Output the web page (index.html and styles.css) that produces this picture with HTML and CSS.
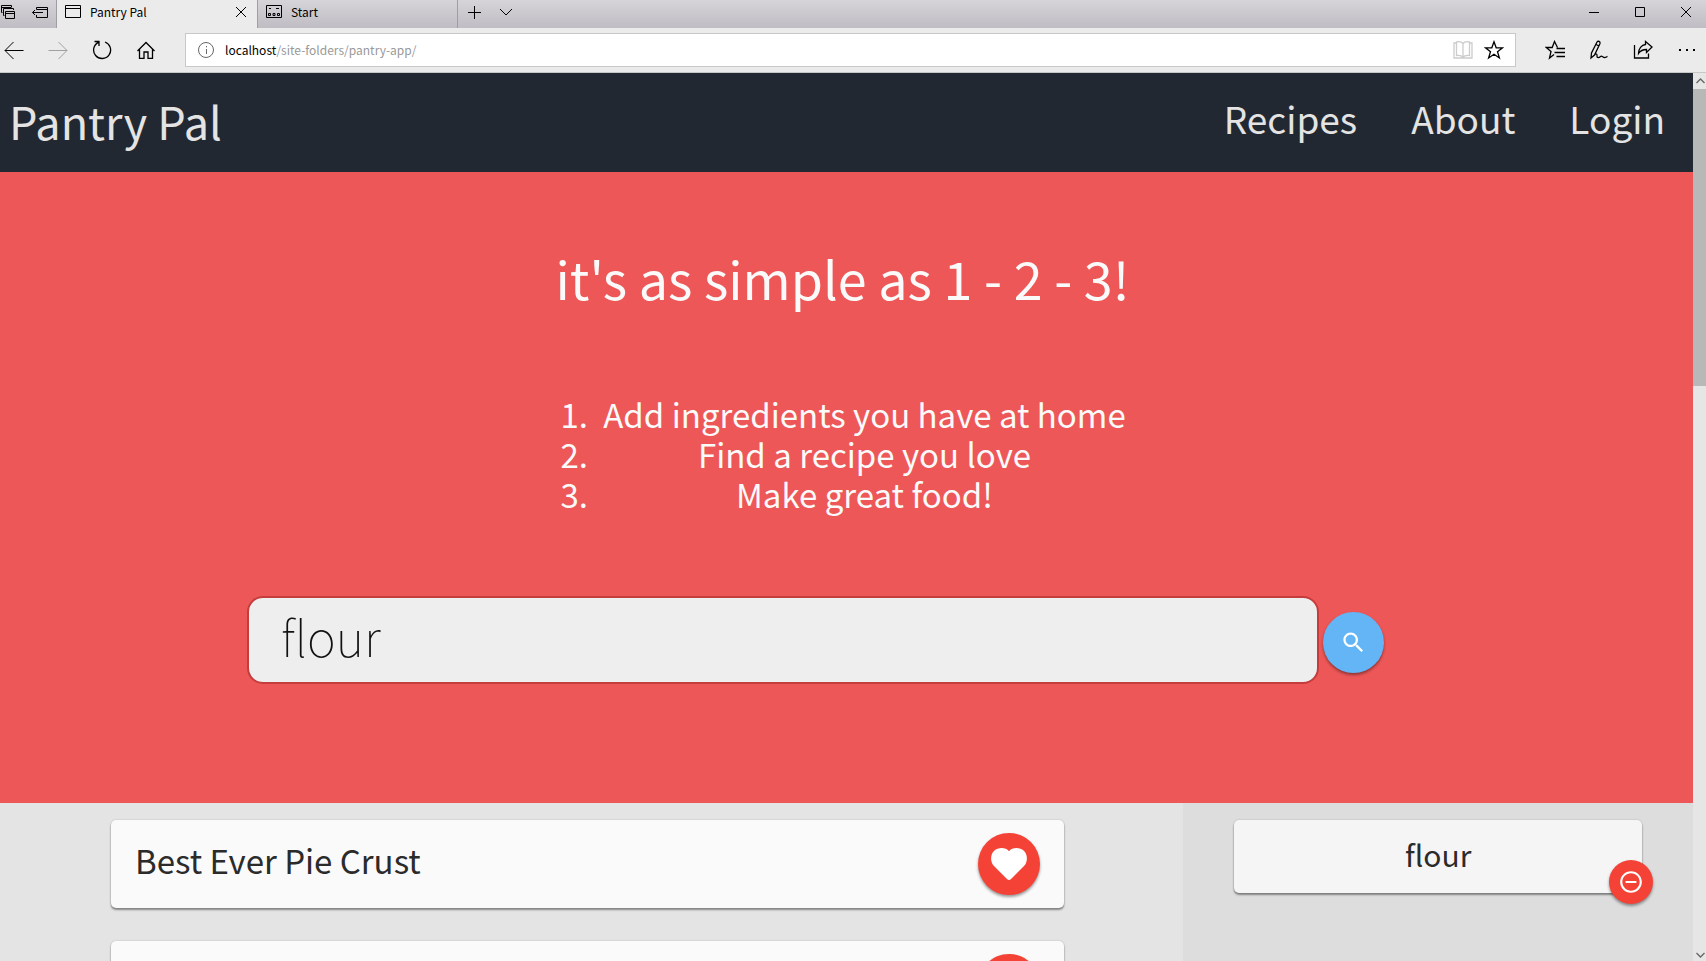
FILE: index.html
```html
<!DOCTYPE html>
<html lang="en">
<head>
<meta charset="utf-8">
<title>Pantry Pal</title>
<link rel="stylesheet" href="styles.css">
</head>
<body>
<header class="browser">
  <div class="tabbar">
    <div class="tab-tools">
      <button class="chrome-btn" aria-label="Tabs set aside"><svg width="16" height="16" viewBox="0 0 16 16"><path d="M2.500 8.500H1.500V1.500H11.500V3M1.500 3.500H11.500M4.500 11.500H3.500V4.500H13.500V6M5.500 7.500H14.500V14.500H5.500ZM5.500 9.500H14.500"/></svg></button>
      <button class="chrome-btn" aria-label="Set tabs aside"><svg width="17" height="16" viewBox="0 0 17 16"><path d="M5.500 5.500V3.500H16.500V13.500H5.500V11M5.500 5.500H16.500M1.500 8.500H12M4 6L1.500 8.500L4 11"/></svg></button>
    </div>
    <div class="tab tab-active">
      <svg width="16" height="16" viewBox="0 0 16 16"><path d="M.5 1.500H15.500V13.500H.5ZM.5 4.500H15.500"/></svg>
      <span class="tab-name">Pantry Pal</span>
      <button class="chrome-btn tab-close" aria-label="Close tab"><svg width="12" height="12" viewBox="0 0 12 12"><path d="M1 1L11 11M11 1L1 11"/></svg></button>
    </div>
    <div class="tab">
      <svg width="16" height="16" viewBox="0 0 16 16"><path d="M.5 1.500H15.500V13.500H.5ZM3 4.500H5M10 4.500H13M2.500 9.500H4.500V11.500H2.500ZM7 9.500H9V11.500H7ZM11.500 9.500H13.500V11.500H11.500Z"/></svg>
      <span class="tab-name">Start</span>
    </div>
    <div class="tab-actions">
      <button class="chrome-btn" aria-label="New tab"><svg width="14" height="14" viewBox="0 0 14 14"><path d="M7.500 1V14M1 7.500H14"/></svg></button>
      <button class="chrome-btn" aria-label="Tab previews"><svg width="14" height="14" viewBox="0 0 14 14"><path d="M1 4L7 10L13 4"/></svg></button>
    </div>
    <div class="window-controls">
      <button class="chrome-btn" aria-label="Minimize"><svg width="12" height="12" viewBox="0 0 12 12"><path d="M1 6.500H11"/></svg></button>
      <button class="chrome-btn" aria-label="Maximize"><svg width="12" height="12" viewBox="0 0 12 12"><path d="M1.500 1.500H10.500V10.500H1.500Z"/></svg></button>
      <button class="chrome-btn" aria-label="Close"><svg width="12" height="12" viewBox="0 0 12 12"><path d="M1 1L11 11M11 1L1 11"/></svg></button>
    </div>
  </div>
  <div class="toolbar">
    <div class="nav-buttons">
      <button class="chrome-btn" aria-label="Back"><svg width="20" height="20" viewBox="0 0 20 20"><path d="M19.500 10.500H1M9.500 2L1 10.500L9.500 19"/></svg></button>
      <button class="chrome-btn dim" aria-label="Forward"><svg width="20" height="20" viewBox="0 0 20 20"><path d="M.5 10.500H19M10.500 2L19 10.500L10.500 19"/></svg></button>
      <button class="chrome-btn" aria-label="Refresh"><svg width="20" height="20" viewBox="0 0 20 20"><path class="medium" d="M6.500 2.300A8.500 8.500 0 1 0 13 2M2.500 1.500H7V6"/></svg></button>
      <button class="chrome-btn" aria-label="Home"><svg width="20" height="20" viewBox="0 0 20 20"><path class="medium" d="M1.500 11L10 2.500L18.500 11M3.500 9.500V18.300H8V12H12V18.300H16.500V9.500"/></svg></button>
    </div>
    <div class="address">
      <svg class="grey" width="16" height="16" viewBox="0 0 16 16"><circle cx="8" cy="8" r="7.500"/><path d="M8.500 7V12M8.500 4V5.300"/></svg>
      <span class="url"><span class="host">localhost</span>/site-folders/pantry-app/</span>
      <button class="chrome-btn faint" aria-label="Reading view"><svg width="20" height="20" viewBox="0 0 20 20"><path class="medium" d="M3 3H1V18H19V3H17M10 3.500C8.500 1.500 5.500 1.500 3.500 2V15.500C6 15 8.500 15.500 10 17C11.500 15.500 14 15 16.500 15.500V2C14.500 1.500 11.500 1.500 10 3.500V17"/></svg></button>
      <button class="chrome-btn" aria-label="Add to favorites"><svg width="20" height="20" viewBox="0 0 20 20"><path class="medium" d="M10 1.800L12.200 7.800H18.600L13.500 11.700L15.400 18L10 14.300L4.600 18L6.500 11.700L1.400 7.800H7.800Z"/></svg></button>
    </div>
    <div class="hub">
      <button class="chrome-btn" aria-label="Hub"><svg width="20" height="20" viewBox="0 0 20 20"><path class="medium" d="M12.500 7.500L9.500 1.500L7.200 7.500H1.200L6 11.500L4.500 18L9 14.500M11.500 8.500H20M9.500 12.500H20M11.500 16.500H20"/></svg></button>
      <button class="chrome-btn" aria-label="Add notes"><svg width="20" height="20" viewBox="0 0 20 20"><path class="medium" d="M2 18L2.500 13L8 2C9 .5 11.500 1.500 11 3.500L5.500 15ZM7 4.500L10 6M5.500 15C7 13 8.500 14 8 16.500C8 18 10 18 11.500 16.500C13 15 14 18 16 17.500C17.500 17.500 18 16.500 18.500 16.500"/></svg></button>
      <button class="chrome-btn" aria-label="Share"><svg width="20" height="20" viewBox="0 0 20 20"><path class="medium" d="M1.500 5V18H15.500V13.500M12.500 1.500L19 7L13.500 12.500V9.500C9.500 9.500 7.500 10.500 5.500 13.500C5.500 8.500 8.500 5 12.500 4.500Z"/></svg></button>
      <button class="chrome-btn" aria-label="More"><svg width="20" height="20" viewBox="0 0 20 20"><path class="solid" d="M2 9h2v2H2zM9 9h2v2H9zM16 9h2v2h-2z"/></svg></button>
    </div>
  </div>
</header>
<div class="viewport">
  <div class="page">
    <nav class="navbar">
      <a class="brand" href="#">Pantry Pal</a>
      <div class="nav-links">
        <a href="#recipes">Recipes</a>
        <a href="#about">About</a>
        <a href="#login">Login</a>
      </div>
    </nav>
    <section class="hero">
      <h1 class="hero-title">it's as simple as 1 - 2 - 3!</h1>
      <ol class="steps">
        <li>Add ingredients you have at home</li>
        <li>Find a recipe you love</li>
        <li>Make great food!</li>
      </ol>
      <form class="search">
        <input class="search-input" type="text" value="flour" aria-label="Ingredient">
        <button class="round search-btn" type="button" aria-label="Search"><svg width="27" height="27" viewBox="0 0 24 24"><path class="solid" d="M15.500 14h-.79l-.28-.27C15.410 12.590 16 11.110 16 9.500 16 5.910 13.090 3 9.500 3S3 5.910 3 9.500 5.910 16 9.500 16c1.610 0 3.090-.59 4.230-1.570l.27.28v.79l5 4.990L20.490 19l-4.990-5zm-6 0C7.010 14 5 11.990 5 9.500S7.010 5 9.500 5 14 7.010 14 9.500 11.990 14 9.500 14z"/></svg></button>
      </form>
    </section>
    <main class="content">
      <section class="recipes" id="recipes">
        <article class="card recipe">
          <h2 class="recipe-name">Best Ever Pie Crust</h2>
          <button class="round like" aria-label="Save Best Ever Pie Crust"><svg width="36" height="32" viewBox="0 0 36 32"><path class="solid" d="M18 3.200C15 -.5 7.500 -1.200 3.200 2.800C-.8 6.500 -1 14 3 18L16 31C17.200 32.200 18.800 32.200 20 31L33 18C37 14 36.800 6.500 32.800 2.800C28.500 -1.200 21 -.5 18 3.200Z"/></svg></button>
        </article>
        <article class="card recipe">
          <button class="round like" aria-label="Save recipe"><svg width="36" height="32" viewBox="0 0 36 32"><path class="solid" d="M18 3.200C15 -.5 7.500 -1.200 3.200 2.800C-.8 6.500 -1 14 3 18L16 31C17.200 32.200 18.800 32.200 20 31L33 18C37 14 36.800 6.500 32.800 2.800C28.500 -1.200 21 -.5 18 3.200Z"/></svg></button>
        </article>
      </section>
      <aside class="pantry">
        <div class="card ingredient">
          <span>flour</span>
          <button class="round remove" aria-label="Remove flour"><svg width="26" height="26" viewBox="0 0 24 24"><path class="solid" d="M7 11v2h10v-2H7zm5-9C6.480 2 2 6.480 2 12s4.480 10 10 10 10-4.480 10-10S17.520 2 12 2zm0 18c-4.410 0-8-3.590-8-8s3.590-8 8-8 8 3.590 8 8-3.590 8-8 8z"/></svg></button>
        </div>
      </aside>
    </main>
  </div>
  <div class="scrollbar" aria-hidden="true">
    <svg class="grey" width="13" height="16" viewBox="0 0 13 16"><path class="medium" d="M3.500 10L7.500 6L11.500 10"/></svg>
    <div class="track"><div class="thumb"></div></div>
    <svg class="grey" width="13" height="12" viewBox="0 0 13 12"><path class="medium" d="M3.500 4L7.500 8L11.500 4"/></svg>
  </div>
</div>
</body>
</html>
```

FILE: styles.css
```css
* {
  box-sizing: border-box;
}

body {
  margin: 0;
  height: 100vh;
  display: flex;
  flex-direction: column;
  overflow: hidden;
  font-family: "Noto Sans CJK JP", "Noto Sans", sans-serif;
}

button {
  border: 0;
  padding: 0;
  background: none;
  font: inherit;
}

a {
  color: inherit;
  text-decoration: none;
}

svg {
  display: block;
  flex: none;
  fill: none;
  stroke: currentColor;
}

.medium {
  stroke-width: 1.3;
}

.solid {
  fill: currentColor;
  stroke: none;
}

.grey {
  color: #666;
}

.chrome-btn {
  display: flex;
  color: #000;
}

.dim {
  color: #a0a0a0;
}

.faint {
  color: #ccc;
}

/* Browser frame */
.browser {
  flex: none;
  font-size: 12px;
  line-height: 16px;
  color: #000;
}

.tabbar {
  display: flex;
  height: 28px;
  padding-right: 14px;
  background: linear-gradient(#d6d4d8, #bfbdc3);
}

.tab-tools,
.tab-actions,
.window-controls {
  display: flex;
  align-items: center;
  padding-bottom: 4px;
}

.tab-tools {
  gap: 15px;
  width: 56px;
}

.tab {
  display: flex;
  align-items: center;
  gap: 9px;
  width: 200px;
  padding: 0 10px 4px 8px;
  border-right: 1px solid #a09ea2;
}

.tab-active {
  width: 202px;
  border-left: 1px solid #a09ea2;
  background: #ebebeb;
}

.tab-name {
  flex: 1;
}

.tab-actions {
  gap: 18px;
  margin-left: 9px;
}

.window-controls {
  gap: 34px;
  margin-left: auto;
}

.toolbar {
  display: flex;
  align-items: center;
  height: 45px;
  padding: 0 9px 0 5px;
  border-bottom: 1px solid #c8c8c8;
  background: #ebebeb;
}

.nav-buttons {
  display: flex;
  gap: 24px;
  margin: 0 29px 0 -1px;
}

.address {
  flex: 1;
  display: flex;
  align-items: center;
  gap: 11px;
  height: 34px;
  padding: 0 11px 0 12px;
  border: 1px solid #c8c8c8;
  background: #fff;
}

.url {
  flex: 1;
  color: #999;
}

.host {
  color: #000;
}

.hub {
  display: flex;
  gap: 24px;
  margin-left: 29px;
}

/* Page */
.viewport {
  flex: 1;
  min-height: 0;
  display: flex;
}

.page {
  flex: 1;
  display: flex;
  flex-direction: column;
  overflow: hidden;
}

.navbar {
  flex: none;
  display: flex;
  justify-content: space-between;
  align-items: center;
  height: 99px;
  padding: 0 28px 3px 9px;
  background: #222831;
  color: #e4e4e4;
}

.brand {
  font-size: 45px;
  line-height: 64px;
}

.nav-links {
  display: flex;
  gap: 54px;
  padding-bottom: 6px;
  font-size: 37px;
  line-height: 64px;
}

.hero {
  flex: none;
  display: flex;
  flex-direction: column;
  align-items: center;
  padding: 70px 0 119px;
  background: #ee5757;
  color: #fafafa;
  text-align: center;
}

.hero-title {
  margin: 0;
  padding-right: 8px;
  font-size: 52px;
  font-weight: 400;
  line-height: 72px;
}

.steps {
  margin: 80px 0 82px;
  padding: 0 8px 0 36px;
  font-size: 33px;
  line-height: 40px;
}

.steps li {
  padding-left: 8px;
}

.search {
  align-self: stretch;
  display: flex;
  align-items: center;
  gap: 4px;
  padding: 0 309px 0 247px;
}

.search-input {
  flex: 1;
  min-width: 0;
  height: 88px;
  padding: 0 32px 10px;
  border: 2px solid #c43c3c;
  border-radius: 16px;
  background: #eee;
  color: #111;
  font-family: inherit;
  font-size: 49px;
  font-weight: 100;
}

.round {
  flex: none;
  display: flex;
  align-items: center;
  justify-content: center;
  border-radius: 50%;
  color: #fff;
  box-shadow: 0 2px 3px rgba(0, 0, 0, 0.4);
}

.search-btn {
  width: 61px;
  height: 61px;
  margin-top: 5px;
  background: #64b5f6;
}

.content {
  flex: 1;
  min-height: 0;
  display: flex;
}

.recipes {
  width: 69.9%;
  padding: 17px 119px 0 111px;
  background: #e4e4e4;
}

.pantry {
  flex: 1;
  padding: 17px 51px 0;
  background: #ddd;
}

.card {
  display: flex;
  align-items: center;
  border-radius: 5px;
  box-shadow: 0 2px 2px rgba(0, 0, 0, 0.4), 0 0 2px rgba(0, 0, 0, 0.2);
  color: #2b2b2b;
}

.recipe {
  height: 88px;
  margin-bottom: 33px;
  padding: 0 24px;
  background: #fafafa;
}

.recipe-name {
  margin: 0;
  padding-bottom: 8px;
  font-size: 33px;
  font-weight: 400;
  line-height: 48px;
}

.like {
  width: 62px;
  height: 62px;
  margin-left: auto;
  background: #f44336;
}

.ingredient {
  position: relative;
  justify-content: center;
  height: 73px;
  padding-bottom: 6px;
  background: #f5f5f5;
  font-size: 30px;
  line-height: 48px;
}

.remove {
  position: absolute;
  right: -11px;
  bottom: -11px;
  width: 44px;
  height: 44px;
  background: #f44336;
}

.scrollbar {
  flex: none;
  display: flex;
  flex-direction: column;
  width: 13px;
  background: #e6e6e6;
}

.track {
  flex: 1;
}

.thumb {
  height: 34.5%;
  background: #b8b8b8;
}
```
